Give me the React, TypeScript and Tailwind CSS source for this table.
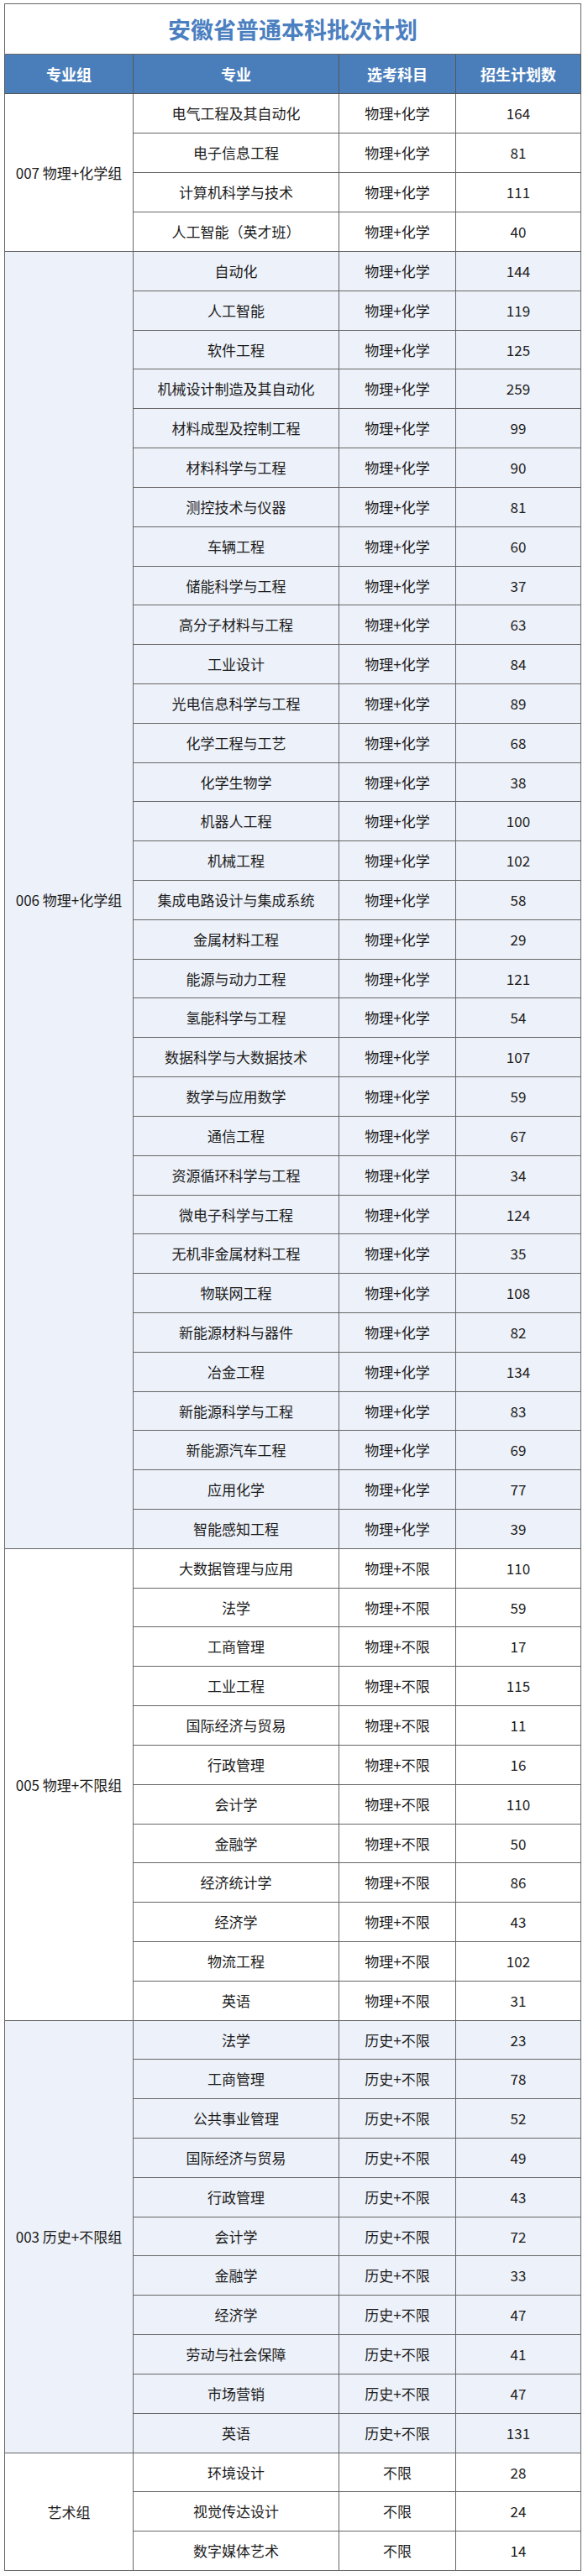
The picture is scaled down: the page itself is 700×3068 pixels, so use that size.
import React from "react";

type Group = { name: string; subj: string; tint: boolean; rows: [string, number][] };

const groups: Group[] = [
  {
    name: "007 物理+化学组",
    subj: "物理+化学",
    tint: false,
    rows: [
      ["电气工程及其自动化", 164],
      ["电子信息工程", 81],
      ["计算机科学与技术", 111],
      ["人工智能（英才班）", 40],
    ],
  },
  {
    name: "006 物理+化学组",
    subj: "物理+化学",
    tint: true,
    rows: [
      ["自动化", 144],
      ["人工智能", 119],
      ["软件工程", 125],
      ["机械设计制造及其自动化", 259],
      ["材料成型及控制工程", 99],
      ["材料科学与工程", 90],
      ["测控技术与仪器", 81],
      ["车辆工程", 60],
      ["储能科学与工程", 37],
      ["高分子材料与工程", 63],
      ["工业设计", 84],
      ["光电信息科学与工程", 89],
      ["化学工程与工艺", 68],
      ["化学生物学", 38],
      ["机器人工程", 100],
      ["机械工程", 102],
      ["集成电路设计与集成系统", 58],
      ["金属材料工程", 29],
      ["能源与动力工程", 121],
      ["氢能科学与工程", 54],
      ["数据科学与大数据技术", 107],
      ["数学与应用数学", 59],
      ["通信工程", 67],
      ["资源循环科学与工程", 34],
      ["微电子科学与工程", 124],
      ["无机非金属材料工程", 35],
      ["物联网工程", 108],
      ["新能源材料与器件", 82],
      ["冶金工程", 134],
      ["新能源科学与工程", 83],
      ["新能源汽车工程", 69],
      ["应用化学", 77],
      ["智能感知工程", 39],
    ],
  },
  {
    name: "005 物理+不限组",
    subj: "物理+不限",
    tint: false,
    rows: [
      ["大数据管理与应用", 110],
      ["法学", 59],
      ["工商管理", 17],
      ["工业工程", 115],
      ["国际经济与贸易", 11],
      ["行政管理", 16],
      ["会计学", 110],
      ["金融学", 50],
      ["经济统计学", 86],
      ["经济学", 43],
      ["物流工程", 102],
      ["英语", 31],
    ],
  },
  {
    name: "003 历史+不限组",
    subj: "历史+不限",
    tint: true,
    rows: [
      ["法学", 23],
      ["工商管理", 78],
      ["公共事业管理", 52],
      ["国际经济与贸易", 49],
      ["行政管理", 43],
      ["会计学", 72],
      ["金融学", 33],
      ["经济学", 47],
      ["劳动与社会保障", 41],
      ["市场营销", 47],
      ["英语", 131],
    ],
  },
  {
    name: "艺术组",
    subj: "不限",
    tint: false,
    rows: [
      ["环境设计", 28],
      ["视觉传达设计", 24],
      ["数字媒体艺术", 14],
    ],
  },
];

// compute row heights: first group rows 47px, remaining rows spread from y=300 to y=3062
const totalRows = groups.reduce((s, g) => s + g.rows.length, 0);
const restRows = totalRows - 4;
const heights: number[] = [];
for (let i = 0; i < totalRows; i++) {
  if (i < 4) heights.push(47);
  else {
    const k = i - 4;
    const a = Math.round(300 + (k * 2762) / restRows);
    const b = Math.round(300 + ((k + 1) * 2762) / restRows);
    heights.push(b - a);
  }
}

const font = { fontFamily: '"Noto Sans CJK SC", "Noto Sans", sans-serif' };

export default function App() {
  let idx = 0;
  return (
    <div className="bg-white w-[700px] pl-[5px] pt-[4px] pb-[6px]" style={font}>
      <table className="border-collapse table-fixed w-[687px] text-[#1c1c1c]">
        <colgroup>
          <col className="w-[153px]" />
          <col className="w-[245px]" />
          <col className="w-[139px]" />
          <col className="w-[149px]" />
        </colgroup>
        <tbody>
          <tr className="h-[60px]">
            <td
              colSpan={4}
              className="border border-[#666] text-center align-middle text-[27px] font-bold text-[#4b7fc0] leading-none"
            >
              安徽省普通本科批次计划
            </td>
          </tr>
          <tr className="h-[47px] bg-[#4a7ebb] text-white text-[18px] font-bold">
            <td className="border border-[#555] text-center align-middle p-0">专业组</td>
            <td className="border border-[#555] text-center align-middle p-0">专业</td>
            <td className="border border-[#555] text-center align-middle p-0">选考科目</td>
            <td className="border border-[#555] text-center align-middle p-0">招生计划数</td>
          </tr>
          {groups.map((g) =>
            g.rows.map((r, i) => {
              const h = heights[idx++];
              const bg = g.tint ? "bg-[#edf1f9]" : "bg-white";
              return (
                <tr key={g.name + i} className={bg + " text-[17px]"} style={{ height: h }}>
                  {i === 0 && (
                    <td
                      rowSpan={g.rows.length}
                      className="border border-[#666] text-center align-middle p-0 whitespace-nowrap"
                    >
                      {g.name}
                    </td>
                  )}
                  <td className="border border-[#666] text-center align-middle p-0 whitespace-nowrap">{r[0]}</td>
                  <td className="border border-[#666] text-center align-middle p-0">{g.subj}</td>
                  <td className="border border-[#666] text-center align-middle p-0">{r[1]}</td>
                </tr>
              );
            })
          )}
        </tbody>
      </table>
    </div>
  );
}
